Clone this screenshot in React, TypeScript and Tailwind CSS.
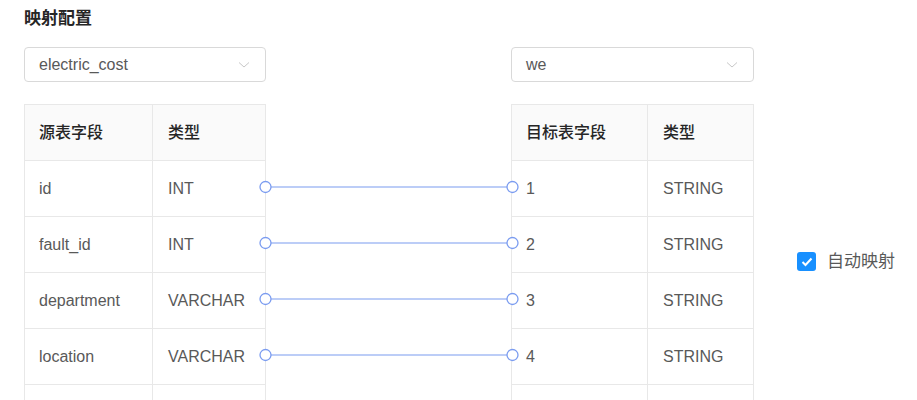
import React from "react";

const font = { fontFamily: '"Liberation Sans", "Noto Sans CJK SC", sans-serif' };

const left = [
  ["id", "INT"],
  ["fault_id", "INT"],
  ["department", "VARCHAR"],
  ["location", "VARCHAR"],
  ["", ""],
];
const right = [
  ["1", "STRING"],
  ["2", "STRING"],
  ["3", "STRING"],
  ["4", "STRING"],
  ["", ""],
];

function Chevron() {
  return (
    <svg width="12" height="8" viewBox="0 0 12 8" className="shrink-0">
      <polyline points="1,1.5 6,6 11,1.5" fill="none" stroke="#c8c8c8" strokeWidth="1" />
    </svg>
  );
}

function Select({ value }: { value: string }) {
  return (
    <div className="flex h-[35px] items-center justify-between rounded border border-[#d9d9d9] pl-[14px] pr-[15px] text-base text-[#595959]">
      <span>{value}</span>
      <Chevron />
    </div>
  );
}

function Table({
  headers,
  rows,
  firstW,
}: {
  headers: [string, string];
  rows: string[][];
  firstW: string;
}) {
  return (
    <div className="border-l border-r border-t border-[#e8e8e8] text-base">
      <div className="flex h-[56px] border-b border-[#e8e8e8] bg-[#fafafa] font-medium text-[#262626]">
        <div className={`${firstW} flex items-center border-r border-[#e8e8e8] pl-[14px]`}>{headers[0]}</div>
        <div className="flex flex-1 items-center pl-[15px]">{headers[1]}</div>
      </div>
      {rows.map((r, i) => (
        <div key={i} className="flex h-[56px] border-b border-[#e8e8e8] text-[#595959]">
          <div className={`${firstW} flex items-center border-r border-[#e8e8e8] pl-[14px]`}>{r[0]}</div>
          <div className="flex flex-1 items-center pl-[15px]">{r[1]}</div>
        </div>
      ))}
    </div>
  );
}

export default function App() {
  const ys = [140, 196, 252, 308];
  return (
    <div className="h-[400px] overflow-hidden bg-white pl-6 pt-[7px]" style={font}>
      <div className="text-[17px] font-bold leading-6 text-[#262626]">映射配置</div>
      <div className="mt-4 flex">
        <div className="w-[242px]">
          <Select value="electric_cost" />
          <div className="mt-[22px]">
            <Table headers={["源表字段", "类型"]} rows={left} firstW="w-[128px]" />
          </div>
        </div>
        <div className="relative w-[245px]">
          <svg
            className="absolute left-[-6px] top-0 overflow-visible"
            width="259"
            height="360"
          >
            {ys.map((y) => (
              <g key={y}>
                <line x1="11" y1={y} x2="247" y2={y} stroke="#7b9cf0" strokeWidth="1.2" />
                <circle cx="5.5" cy={y} r="5.5" fill="#fff" stroke="#7b9cf0" strokeWidth="1.3" />
                <circle cx="252.5" cy={y} r="5.5" fill="#fff" stroke="#7b9cf0" strokeWidth="1.3" />
              </g>
            ))}
          </svg>
        </div>
        <div className="w-[243px]">
          <Select value="we" />
          <div className="mt-[22px]">
            <Table headers={["目标表字段", "类型"]} rows={right} firstW="w-[136px]" />
          </div>
        </div>
        <div className="ml-[43px] pt-[202px]">
          <label className="flex items-center gap-[11px] text-[17px] text-[#595959]">
            <span className="flex h-[19px] w-[19px] items-center justify-center rounded-[3px] bg-[#1890ff]">
              <svg width="12" height="10" viewBox="0 0 12 10">
                <polyline points="1.5,5 4.5,8 10.5,1.5" fill="none" stroke="#fff" strokeWidth="2" />
              </svg>
            </span>
            自动映射
          </label>
        </div>
      </div>
    </div>
  );
}
